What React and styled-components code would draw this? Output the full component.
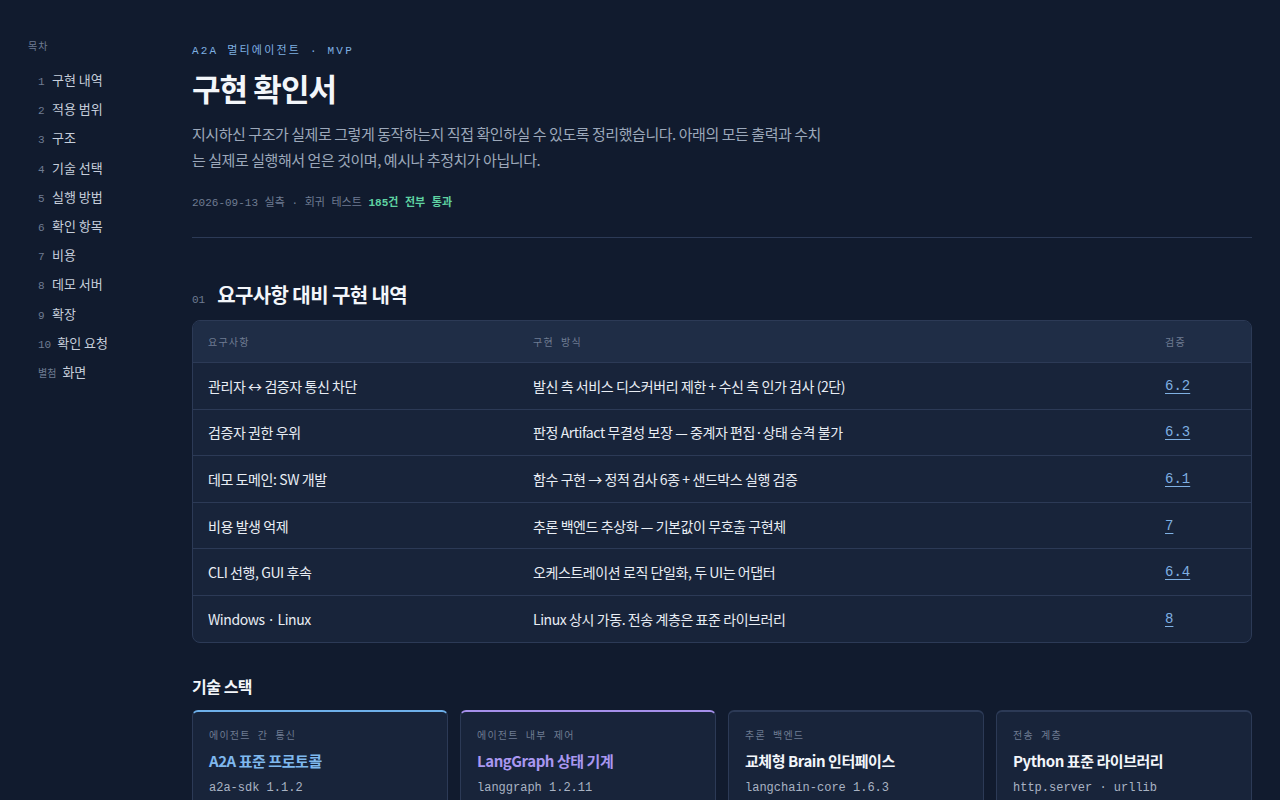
import styled, { createGlobalStyle } from "styled-components";

const GlobalStyle = createGlobalStyle`
  html, body {
    margin: 0;
    padding: 0;
    background: #111b2e;
  }
  body {
    font-family: "Noto Sans CJK KR", "Noto Sans", sans-serif;
    color: #e6ebf2;
    -webkit-font-smoothing: antialiased;
  }
`;

const mono = `"Liberation Mono", "Noto Sans CJK KR", monospace`;

const Page = styled.div`
  display: grid;
  grid-template-columns: 160px 1fr;
  min-height: 800px;
  background: #111b2e;
`;

const Sidebar = styled.nav`
  padding: 40px 0 0 28px;
`;

const TocLabel = styled.div`
  font-family: ${mono};
  font-size: 10px;
  line-height: 16px;
  letter-spacing: 0.1em;
  color: #6f7c92;
  margin-bottom: 9px;
`;

const TocList = styled.ol`
  list-style: none;
  margin: 0;
  padding: 0 0 0 10px;
`;

const TocItem = styled.li`
  display: flex;
  align-items: baseline;
  gap: 6px;
  height: 29.2px;
  line-height: 29px;
`;

const TocNum = styled.span`
  font-family: ${mono};
  font-size: ${(p) => (p.$small ? "10px" : "11px")};
  color: #6f7c92;
  min-width: 8px;
`;

const TocText = styled.span`
  font-size: 13px;
  color: #c6cedb;
`;

const Main = styled.main`
  padding: 42px 28px 0 32px;
`;

const Header = styled.header`
  padding-bottom: 25px;
  border-bottom: 1px solid #2c3a56;
`;

const Eyebrow = styled.div`
  font-family: ${mono};
  font-size: 11px;
  line-height: 18px;
  letter-spacing: 0.2em;
  color: #7fb0e2;
`;

const Title = styled.h1`
  margin: 8px 0 0;
  font-size: 31px;
  line-height: 40px;
  font-weight: 700;
  letter-spacing: -0.03em;
  color: #f3f6fa;
`;

const Lead = styled.p`
  margin: 13px 0 0;
  max-width: 640px;
  font-size: 15px;
  line-height: 26px;
  letter-spacing: -0.03em;
  color: #9ca8ba;
`;

const Meta = styled.div`
  margin-top: 21px;
  font-family: ${mono};
  font-size: 11px;
  line-height: 18px;
  color: #6f7c92;
`;

const Pass = styled.span`
  color: #5fd3a2;
  font-weight: 700;
`;

const SectionHead = styled.h2`
  display: flex;
  align-items: baseline;
  gap: 12px;
  margin: 43px 0 6px;
  font-size: 20px;
  line-height: 28px;
  font-weight: 700;
  letter-spacing: -0.03em;
  color: #f3f6fa;
`;

const SectionNum = styled.span`
  font-family: ${mono};
  font-size: 11px;
  font-weight: 400;
  letter-spacing: 0;
  color: #6f7c92;
`;

const Table = styled.div`
  border: 1px solid #2c3a56;
  border-radius: 8px;
  overflow: hidden;
  background: #18243a;
`;

const Row = styled.div`
  display: grid;
  grid-template-columns: 325px 632px 1fr;
  background: ${(p) => (p.$head ? "#1f2d46" : "transparent")};
  & + & {
    border-top: 1px solid #2c3a56;
  }
`;

const Cell = styled.div`
  display: flex;
  align-items: center;
  height: 45.6px;
  padding: 0 15px;
  font-size: 14px;
  line-height: 20px;
  letter-spacing: -0.03em;
  color: #e8edf4;
`;

const HeadCell = styled.div`
  display: flex;
  align-items: center;
  height: 41px;
  padding: 0 15px;
  font-family: ${mono};
  font-size: 10px;
  letter-spacing: 0.12em;
  color: #6f7c92;
`;

const RefLink = styled.a`
  font-family: ${mono};
  font-size: 14px;
  line-height: 20px;
  letter-spacing: 0;
  color: #7fb0e2;
  text-decoration: underline;
  text-underline-offset: 3px;
`;

const SubHead = styled.h3`
  margin: 31px 0 12px;
  font-size: 16px;
  line-height: 24px;
  font-weight: 700;
  letter-spacing: -0.03em;
  color: #f3f6fa;
`;

const CardGrid = styled.div`
  display: grid;
  grid-template-columns: repeat(4, 1fr);
  gap: 12px;
`;

const Card = styled.div`
  border: 1px solid #2c3a56;
  border-top: 2px solid ${(p) => p.$accent || "#2c3a56"};
  border-radius: 6px;
  background: #18243a;
  padding: 17px 16px 16px;
  height: 110px;
`;

const CardLabel = styled.div`
  font-family: ${mono};
  font-size: 10px;
  line-height: 16px;
  letter-spacing: 0.12em;
  color: #6f7c92;
`;

const CardTitle = styled.div`
  margin-top: 5px;
  font-size: 15px;
  line-height: 22px;
  font-weight: 700;
  letter-spacing: -0.03em;
  color: ${(p) => p.$color || "#f3f6fa"};
`;

const CardCode = styled.div`
  margin-top: 7px;
  font-family: ${mono};
  font-size: 12px;
  line-height: 18px;
  color: #a9b3c3;
`;

const toc = [
  ["1", "구현 내역"],
  ["2", "적용 범위"],
  ["3", "구조"],
  ["4", "기술 선택"],
  ["5", "실행 방법"],
  ["6", "확인 항목"],
  ["7", "비용"],
  ["8", "데모 서버"],
  ["9", "확장"],
  ["10", "확인 요청"],
  ["별첨", "화면"],
];

const rows = [
  ["관리자 ↔ 검증자 통신 차단", "발신 측 서비스 디스커버리 제한 + 수신 측 인가 검사 (2단)", "6.2"],
  ["검증자 권한 우위", "판정 Artifact 무결성 보장 — 중계자 편집·상태 승격 불가", "6.3"],
  ["데모 도메인: SW 개발", "함수 구현 → 정적 검사 6종 + 샌드박스 실행 검증", "6.1"],
  ["비용 발생 억제", "추론 백엔드 추상화 — 기본값이 무호출 구현체", "7"],
  ["CLI 선행, GUI 후속", "오케스트레이션 로직 단일화, 두 UI는 어댑터", "6.4"],
  ["Windows · Linux", "Linux 상시 가동. 전송 계층은 표준 라이브러리", "8"],
];

const stack = [
  { label: "에이전트 간 통신", title: "A2A 표준 프로토콜", code: "a2a-sdk 1.1.2", accent: "#6eb0ea", color: "#7fb8ee" },
  { label: "에이전트 내부 제어", title: "LangGraph 상태 기계", code: "langgraph 1.2.11", accent: "#a590ea", color: "#a997f0" },
  { label: "추론 백엔드", title: "교체형 Brain 인터페이스", code: "langchain-core 1.6.3" },
  { label: "전송 계층", title: "Python 표준 라이브러리", code: "http.server · urllib" },
];

export default function App() {
  return (
    <>
      <GlobalStyle />
      <Page>
        <Sidebar>
          <TocLabel>목차</TocLabel>
          <TocList>
            {toc.map(([n, t]) => (
              <TocItem key={n}>
                <TocNum $small={n === "별첨"}>{n}</TocNum>
                <TocText>{t}</TocText>
              </TocItem>
            ))}
          </TocList>
        </Sidebar>

        <Main>
          <Header>
            <Eyebrow>A2A 멀티에이전트 · MVP</Eyebrow>
            <Title>구현 확인서</Title>
            <Lead>
              지시하신 구조가 실제로 그렇게 동작하는지 직접 확인하실 수 있도록 정리했습니다. 아래의 모든 출력과 수치는
              실제로 실행해서 얻은 것이며, 예시나 추정치가 아닙니다.
            </Lead>
            <Meta>
              2026-09-13 실측 · 회귀 테스트 <Pass>185건 전부 통과</Pass>
            </Meta>
          </Header>

          <SectionHead>
            <SectionNum>01</SectionNum>
            요구사항 대비 구현 내역
          </SectionHead>
          <Table>
            <Row $head>
              <HeadCell>요구사항</HeadCell>
              <HeadCell>구현 방식</HeadCell>
              <HeadCell>검증</HeadCell>
            </Row>
            {rows.map(([req, how, ref]) => (
              <Row key={ref}>
                <Cell>{req}</Cell>
                <Cell>{how}</Cell>
                <Cell>
                  <RefLink href={`#s${ref}`}>{ref}</RefLink>
                </Cell>
              </Row>
            ))}
          </Table>

          <SubHead>기술 스택</SubHead>
          <CardGrid>
            {stack.map((s) => (
              <Card key={s.label} $accent={s.accent}>
                <CardLabel>{s.label}</CardLabel>
                <CardTitle $color={s.color}>{s.title}</CardTitle>
                <CardCode>{s.code}</CardCode>
              </Card>
            ))}
          </CardGrid>
        </Main>
      </Page>
    </>
  );
}
